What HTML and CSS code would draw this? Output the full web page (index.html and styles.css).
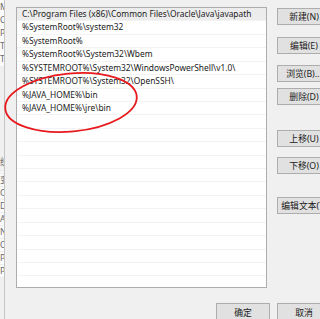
FILE: index.html
```html
<!DOCTYPE html>
<html lang="zh-CN">
<head>
    <meta charset="UTF-8">
    <title>编辑环境变量</title>
    <link rel="stylesheet" href="styles.css">
</head>
<body>
    <div class="page">
        <!-- edge of the window behind -->
        <div class="behind">
            <div class="behind-list">
                <div>M</div><div>On</div><div>Pa</div><div>TE</div><div>TM</div>
            </div>
            <div class="behind-gap"></div>
            <div class="behind-label">统</div>
            <div class="behind-list lower">
                <div>变</div><div>Co</div><div>Dr</div><div>A</div><div>NU</div><div>OS</div><div>Pa</div><div>PA</div>
            </div>
        </div>

        <div class="content">
            <div class="main">
                <div class="listbox">
                    <div class="row selected">C:\Program Files (x86)\Common Files\Oracle\Java\javapath</div>
                    <div class="row">%SystemRoot%\system32</div>
                    <div class="row">%SystemRoot%</div>
                    <div class="row">%SystemRoot%\System32\Wbem</div>
                    <div class="row">%SYSTEMROOT%\System32\WindowsPowerShell\v1.0\</div>
                    <div class="row">%SYSTEMROOT%\System32\OpenSSH\</div>
                    <div class="row">%JAVA_HOME%\bin</div>
                    <div class="row">%JAVA_HOME%\jre\bin</div>
                    <div class="row"></div>
                    <div class="row"></div>
                    <div class="row"></div>
                    <div class="row"></div>
                    <div class="row"></div>
                    <div class="row"></div>
                    <div class="row"></div>
                    <div class="row"></div>
                    <div class="row"></div>
                    <div class="row"></div>
                    <div class="row"></div>
                    <div class="row"></div>
                    <div class="row"></div>
                </div>
                <div class="side">
                    <button class="btn new">新建(N)</button>
                    <button class="btn edit">编辑(E)</button>
                    <button class="btn browse">浏览(B)...</button>
                    <button class="btn remove">删除(D)</button>
                    <button class="btn up">上移(U)</button>
                    <button class="btn down">下移(O)</button>
                    <button class="btn text">编辑文本(T)</button>
                </div>
            </div>
            <div class="footer">
                <button class="btn">确定</button>
                <button class="btn">取消</button>
            </div>
        </div>

        <svg class="mark" width="320" height="319" viewBox="0 0 320 319">
            <ellipse cx="71" cy="102.5" rx="66" ry="29" transform="rotate(-5.5 71 102.5)" fill="none" stroke="#e8191c" stroke-width="1.8"/>
        </svg>
    </div>
</body>
</html>
```

FILE: styles.css
```css
body {
    margin: 0;
    background: #f0f0f0;
    font-family: "Noto Sans", "Noto Sans CJK SC", sans-serif;
    font-size: 8.8px;
    color: #1a1a1a;
    overflow: hidden;
}
.page {
    position: relative;
    display: flex;
    width: 320px;
    height: 319px;
    overflow: hidden;
}
.behind {
    flex: none;
    width: 4px;
    border-right: 1px solid #c4c4c4;
    overflow: hidden;
    white-space: nowrap;
    color: #6a6a6a;
    display: flex;
    flex-direction: column;
}
.behind-list {
    background: #fbfbfb;
    padding-top: 1px;
}
.behind-list div {
    height: 13px;
    line-height: 13px;
}
.behind-gap { height: 84px; background: #f0f0f0; }
.behind-label {
    height: 20px;
    line-height: 20px;
    margin-top: 2px;
}
.behind-list.lower div { border-top: 1px solid #ececec; height: 12px; }
.content {
    flex: 1;
    display: flex;
    flex-direction: column;
    padding: 7px 0 0 11px;
    min-width: 0;
}
.main {
    display: flex;
    gap: 10px;
}
.listbox {
    flex: none;
    box-sizing: border-box;
    width: 251px;
    height: 281px;
    border: 1px solid #adadad;
    background: #fff;
    overflow: hidden;
}
.row {
    box-sizing: border-box;
    height: 13.43px;
    line-height: 12.4px;
    padding-left: 5px;
    font-size: 8.4px;
    color: #222;
    border-bottom: 1px solid #f3f3f3;
    white-space: nowrap;
    overflow: hidden;
}
.row.selected { background: #ececec; }
.side {
    flex: none;
    display: flex;
    flex-direction: column;
    width: 54px;
}
.btn {
    box-sizing: border-box;
    width: 54px;
    height: 17px;
    padding: 0;
    border: 1px solid #adadad;
    background: #e1e1e1;
    font: inherit;
    color: #1a1a1a;
    white-space: nowrap;
    overflow: visible;
}
.side .new { margin-top: 1px; }
.side .edit { margin-top: 12px; }
.side .browse { margin-top: 11px; }
.side .remove { margin-top: 6px; }
.side .up { margin-top: 25px; }
.side .down { margin-top: 10px; }
.side .text { margin-top: 23px; }
.footer {
    display: flex;
    gap: 7px;
    margin-top: 15px;
    padding-left: 200px;
}
.footer .btn { flex: none; height: 18px; }
.mark {
    position: absolute;
    left: 0;
    top: 0;
    pointer-events: none;
}
```
